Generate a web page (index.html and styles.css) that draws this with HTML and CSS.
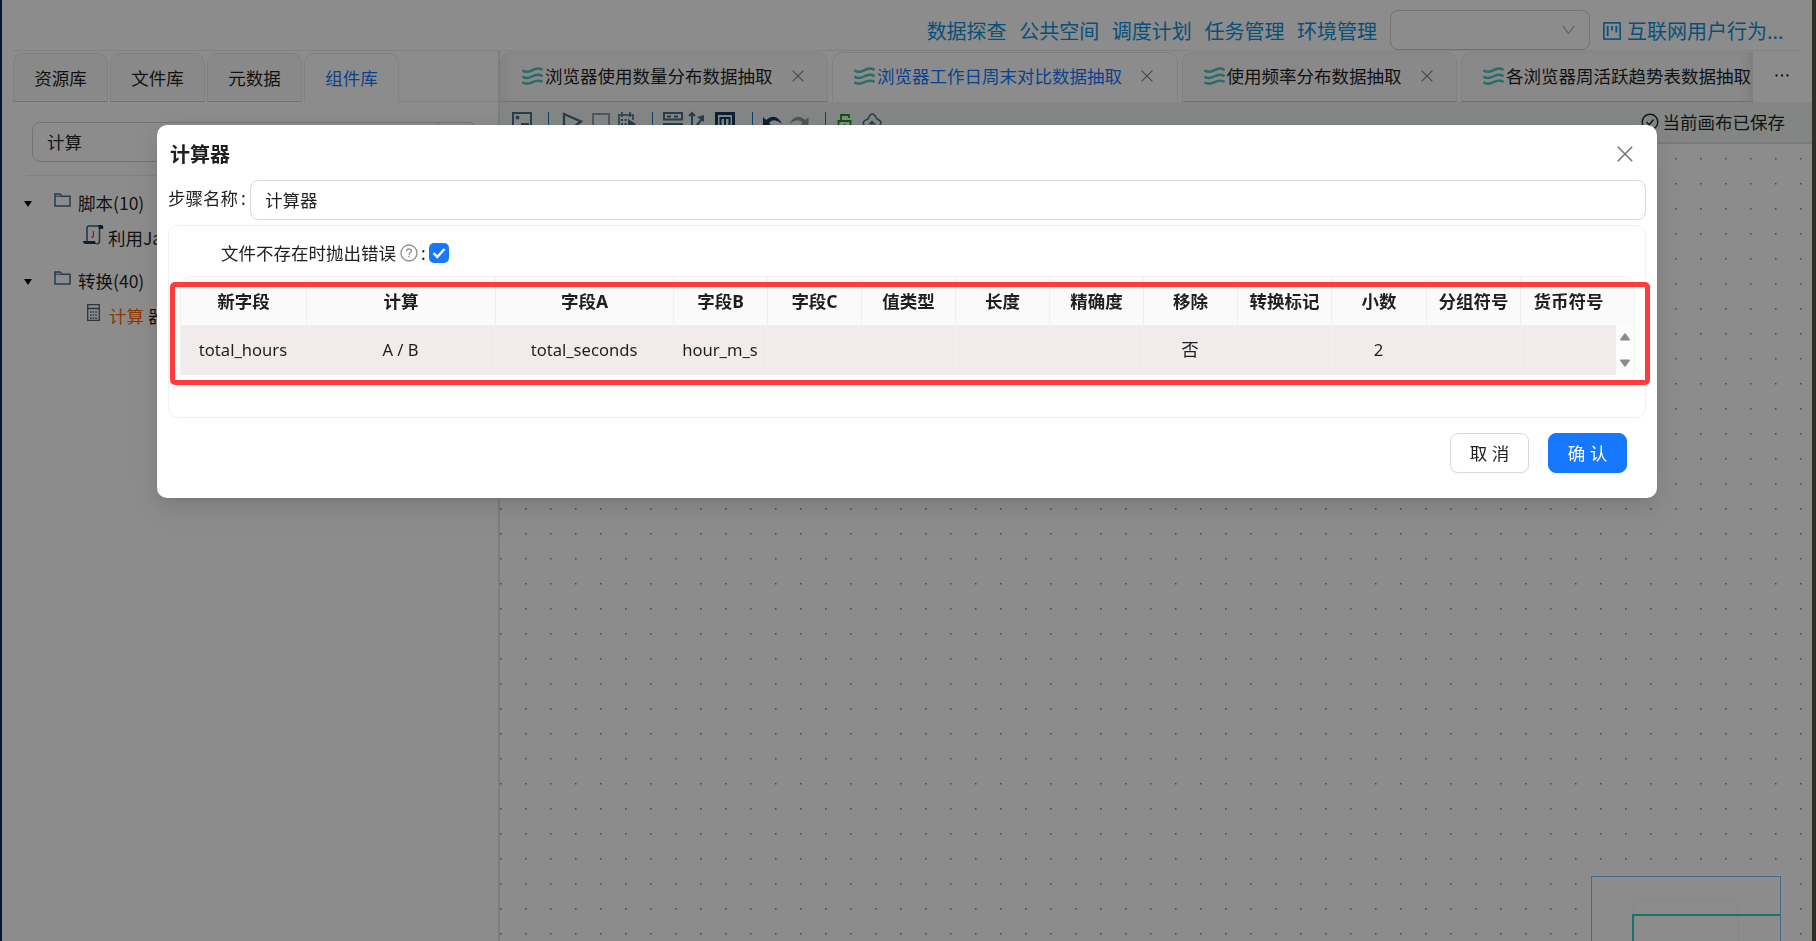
FILE: index.html
```html
<!DOCTYPE html>
<html lang="zh-CN">
<head>
<meta charset="utf-8">
<title>计算器</title>
<link rel="stylesheet" href="styles.css">
</head>
<body>
<svg width="0" height="0" class="defs">
  <symbol id="wave" viewBox="0 0 21 18"><g fill="none" stroke="currentColor" stroke-width="2.500"><path d="M.4 3.200C4 6 7 5 10 3.300S16.500.4 20.600 3"/><path d="M.4 9.400C4 12.200 7 11.200 10 9.500s6.500-2.900 10.600-.3"/><path d="M.4 15.200c3.600 2.400 6.600 1.600 9.600.1s6.500-2.900 10.600-.3"/></g></symbol>
  <symbol id="close" viewBox="0 0 12 12"><path d="M.6.6l10.800 10.800M11.400.6L.6 11.400" fill="none" stroke="currentColor" stroke-width="1.200"/></symbol>
  <symbol id="folder" viewBox="0 0 17 14"><path d="M1 1h5l2 2.200h8v9.800H1z" fill="none" stroke="currentColor" stroke-width="1.500"/><path d="M1 3.200h7" stroke="currentColor"/></symbol>
</svg>
<div class="app">
  <header class="header">
    <nav class="nav"><a>数据探查</a><a>公共空间</a><a>调度计划</a><a>任务管理</a><a>环境管理</a></nav>
    <div class="select"><svg width="13" height="10" viewBox="0 0 13 10"><path d="M.8 1l5.700 7.500L12.200 1" fill="none" stroke="#b8b8b8" stroke-width="1.300"/></svg></div>
    <a class="project"><svg width="18" height="18" viewBox="0 0 18 18" fill="none" stroke="currentColor" stroke-width="1.600"><rect x=".9" y=".9" width="16.200" height="16.200"/><path d="M4.700 4v10M9 4v4.500M13.300 4v6.500" stroke-width="1.800"/></svg>互联网用户行为...</a>
  </header>
  <div class="main">
    <aside class="side">
      <div class="side-tabs"><div class="stab">资源库</div><div class="stab">文件库</div><div class="stab">元数据</div><div class="stab on">组件库</div><div class="rest"></div></div>
      <div class="search"><span>计算</span><i></i></div>
      <div class="tree">
        <div class="node"><b class="caret"></b><svg class="folder" width="17" height="14"><use href="#folder"/></svg>脚本(10)</div>
        <div class="leaf script"><svg width="21" height="20" viewBox="0 0 21 20"><path d="M4 16V3Q4 1 6 1h11M16.500 2v14q0 3-3 3" fill="none" stroke="#3a6080" stroke-width="1.500"/><path d="M0 16h12q0 2 2 3H3q-3 0-3-3zM15 0h4q2 1 1 4h-4z" fill="#123d63"/><path d="M10.300 6v5q0 1.500-1.800 1" fill="none" stroke="#c02a3c" stroke-width="1.100"/></svg>利用Java代码</div>
        <div class="node second"><b class="caret"></b><svg class="folder" width="17" height="14"><use href="#folder"/></svg>转换(40)</div>
        <div class="leaf calc"><svg width="13" height="17" viewBox="0 0 13 17"><path d="M.7.7h11.600v15.600H.7zM.7 4.500h11.600" fill="none" stroke="#4a6276" stroke-width="1.300"/><path d="M3 8h7M3 11h7M3 14h7" stroke="#4a6276" stroke-width="1.600" stroke-dasharray="1.600 1"/></svg><em>计算</em> 器</div>
      </div>
    </aside>
    <section class="work">
      <div class="tabs">
        <div class="tab t1"><svg class="wave"><use href="#wave"/></svg><span>浏览器使用数量分布数据抽取</span><svg class="x"><use href="#close"/></svg></div>
        <div class="tab t2 on"><svg class="wave"><use href="#wave"/></svg><span>浏览器工作日周末对比数据抽取</span><svg class="x"><use href="#close"/></svg></div>
        <div class="tab t3"><svg class="wave"><use href="#wave"/></svg><span>使用频率分布数据抽取</span><svg class="x"><use href="#close"/></svg></div>
        <div class="tab t4"><svg class="wave"><use href="#wave"/></svg><span>各浏览器周活跃趋势表数据抽取</span></div>
        <div class="more"><svg width="14" height="3" viewBox="0 0 14 3" fill="#222"><circle cx="1.500" cy="1.500" r="1.150"/><circle cx="7" cy="1.500" r="1.150"/><circle cx="12.500" cy="1.500" r="1.150"/></svg></div>
      </div>
      <div class="toolbar">
        <svg width="400" height="40" viewBox="490 102 400 40" fill="none" stroke="#4b6e8c" stroke-width="2">
          <path d="M513 113h18v17h-18zM521 124h8"/><circle cx="517.500" cy="117.500" r="1"/>
          <path d="M564 114v20l17-12.500z" stroke-width="2.300"/><path d="M593 114h16v16h-16z" stroke="#8fa1b1"/>
          <path d="M619 115h14v5M619 114v15h10M622 112v5M630 112v5" stroke-width="1.600"/><path d="M621 120h8M621 124h6M621 127h6" stroke-dasharray="2 1.500"/><path d="M628 119l8 5-8 5z" fill="#4b6e8c" stroke="none"/>
          <path d="M664 113h18v6.500h-18zM663 124h20M667 116.500h4M674 116.500h4"/>
          <path d="M692 113v18M689 116l3-3 3 3M692 131l10-12"/><path d="M704 115v7l-7-5z" fill="#4b6e8c" stroke="none"/>
          <path d="M716.500 113.500h17v18h-17z" stroke="#153b5c" stroke-width="3"/><path d="M720.500 130v-12h9v12M725 118v12" stroke="#153b5c"/>
          <path d="M763 117v9h9l-3-3q4-6 13 1-6-12-16-4z" fill="#153b5c" stroke="none"/><path d="M808.500 117v9h-9l3-3q-4-6-13 1 6-12 16-4z" fill="#999" stroke="none"/>
          <path d="M838.500 121h12v12h-12zM841 121v-6h8v3M844.500 124v4" stroke="#159b15" stroke-width="1.800"/>
          <path d="M867 128q-8-6 1-9 4-10 9 0 8 3 0 9M872 131v-9M869 124.500l3-3 3 3" stroke-width="1.500"/>
          <path d="M548.500 112v20M652.500 112v20M752.500 112v20M825.500 112v20" stroke="#1677d0" stroke-width="1"/>
        </svg>
        <div class="saved"><svg width="18" height="18" viewBox="0 0 18 18" fill="none" stroke="#222" stroke-width="1.400"><circle cx="9" cy="9" r="7.800"/><path d="M5.500 9l2.700 3 4.300-5.500"/></svg>当前画布已保存</div>
      </div>
      <div class="canvas"><div class="minimap"><div class="mm-page"></div><div class="mm-view"></div></div></div>
    </section>
  </div>
</div>
<div class="mask"></div>
<div class="modal">
  <div class="m-head"><h1>计算器</h1><svg width="16" height="16" viewBox="0 0 12 12"><use href="#close"/></svg></div>
  <div class="field"><label>步骤名称<span>:</span></label><div class="input">计算器</div></div>
  <div class="card">
    <div class="check"><span>文件不存在时抛出错误</span><svg class="q" width="18" height="18" viewBox="0 0 18 18" fill="none" stroke="#8c8c8c" stroke-width="1.300"><circle cx="9" cy="9" r="8"/><path d="M6.600 7.300q0-2.400 2.400-2.400t2.400 2.200c0 1.700-2.400 1.600-2.400 3.600M9 12v1.500"/></svg><span class="colon">:</span><svg class="box" width="20" height="20" viewBox="0 0 20 20"><rect width="20" height="20" rx="5" fill="#1677ff"/><path d="M4.600 10l3.700 4 7.200-8" fill="none" stroke="#fff" stroke-width="2.400"/></svg></div>
    <div class="table">
      <div class="row th"><div>新字段</div><div>计算</div><div>字段A</div><div>字段B</div><div>字段C</div><div>值类型</div><div>长度</div><div>精确度</div><div>移除</div><div>转换标记</div><div>小数</div><div>分组符号</div><div>货币符号</div><div></div></div>
      <div class="row td"><div>total_hours</div><div>A / B</div><div>total_seconds</div><div>hour_m_s</div><div></div><div></div><div></div><div></div><div class="cjk">否</div><div></div><div>2</div><div></div><div></div><div class="scroll"><svg width="10" height="50" viewBox="0 0 10 50" fill="#8b8b8b"><path d="M4 9q1-1.500 2 0l4 5.500q0 1-1 1H1q-1 0-1-1zM4 41q1 1.500 2 0l4-5.500q0-1-1-1H1q-1 0-1 1z"/></svg></div></div>
    </div>
  </div>
  <div class="actions"><button>取 消</button><button class="ok">确 认</button></div>
  <div class="highlight"></div>
</div>
</body>
</html>
```
FILE: styles.css
```css
* { box-sizing: border-box; }
body { margin: 0; width: 1816px; height: 941px; overflow: hidden; background: #fff; font: 17.5px/28px "Noto Sans", "Noto Sans CJK SC", sans-serif; color: #1f1f1f; }
.defs { position: absolute; }
svg { flex: none; display: block; }
.app { height: 941px; border-left: 2px solid #002a5c; border-right: 4px solid #55534e; display: flex; flex-direction: column; }
.header { height: 51px; margin: 0 10px; border-bottom: 1px solid #ececec; display: flex; justify-content: flex-end; align-items: flex-start; padding-right: 21px; color: #0f93da; font-size: 20px; font-family: "Noto Sans CJK SC", sans-serif; line-height: 42px; }
.nav { display: flex; gap: 12.6px; padding-top: 10px; }
.select { width: 200px; height: 40px; margin: 10px 13px 0 13px; border: 1px solid #d0d0d0; border-radius: 8px; display: flex; justify-content: flex-end; align-items: center; padding-right: 14px; }
.project { width: 178px; padding-top: 10px; display: flex; align-items: center; gap: 6px; white-space: nowrap; }
.main { flex: 1; display: flex; min-height: 0; font-family: "Noto Sans CJK SC", sans-serif; }
.side { width: 498px; border-right: 2px solid #e3e3e3; }
.side-tabs { display: flex; gap: 2px; height: 51px; padding: 2px 0 0 11px; }
.stab { width: 95px; border: 1px solid #ececec; border-bottom-color: #cfcfcf; border-radius: 10px 10px 0 0; background: #fafafa; text-align: center; line-height: 47px; }
.stab.on { background: #fff; color: #1677ff; border-bottom-color: #fff; }
.rest { flex: 1; margin-left: -2px; border-bottom: 1px solid #ececec; }
.search { width: 445px; height: 40px; margin: 20px 0 0 30px; border: 1px solid #d0d0d0; border-radius: 8px; padding-left: 14px; display: flex; line-height: 38px; justify-content: space-between; }
.search i { width: 38px; border-left: 1px solid #d0d0d0; }
.tree { margin: 13px 20px 0 24px; border-top: 1px solid #ececec; padding-top: 12px; }
.node { display: flex; align-items: center; height: 30px; }
.node.second { margin-top: 8px; }
.caret { border: 4px solid transparent; border-top: 6px solid #111; border-bottom: 0; margin: 1px 22px 0 -2px; }
.folder { color: #4b6e8c; margin: 0 7px 6px 0; }
.leaf { display: flex; align-items: center; height: 40px; white-space: pre; }
.leaf em { color: #f60; font-style: normal; }
.script { padding-left: 57px; gap: 4px; }
.script svg { margin-bottom: 7px; }
.calc { padding-left: 61px; }
.calc svg { margin: 0 9px 8px 0; }
.work { width: 1312px; flex: none; display: flex; flex-direction: column; }
.tabs { display: flex; height: 51px; padding-top: 1px; gap: 4px; overflow: hidden; }
.tab { flex: none; border: 1px solid #ececec; border-bottom-color: #cfcfcf; border-radius: 10px 10px 0 0; background: #fafafa; display: flex; align-items: center; padding: 0 0 3px 21px; white-space: nowrap; }
.tab.on { color: #1677ff; background: #fff; border-bottom-color: #fff; }
.wave { width: 21px; height: 18px; color: #4fc3bd; margin-right: 2px; }
.x { width: 12px; height: 12px; margin-left: 19px; color: #888; }
.t1 { width: 328px; background: linear-gradient(90deg, #f0f0f0, #fafafa 16px); }
.t2 { width: 345.500px; }
.t3 { width: 275.500px; }
.t4 { width: 292px; border-right: 0; border-radius: 10px 0 0; background: linear-gradient(270deg, #e8e8e8, #fafafa 14px); }
.more { width: 57px; margin-left: -4px; display: flex; align-items: center; justify-content: center; padding-bottom: 3px; }
.toolbar { height: 42px; background: #eff5f3; border-bottom: 2px solid #dedede; display: flex; justify-content: space-between; }
.toolbar > svg { margin-left: -10px; }
.saved { display: flex; align-items: center; gap: 4px; padding: 0 27px 1px 0; }
.canvas { flex: 1; position: relative; background: radial-gradient(circle at .7px .7px, #808080 .3px, #c8c8c8 .8px, #d6d6d6 1.150px, transparent 1.200px) 0 14px / 25px 25px; }
.minimap { position: absolute; left: 1091px; top: 732px; width: 190px; height: 66px; border: 1px solid #85bff5; border-bottom: 0; background: #fff; overflow: hidden; }
.mm-page { position: absolute; left: 43px; top: 25px; width: 102px; height: 60px; box-shadow: 0 0 5px #eee; }
.mm-view { position: absolute; left: 40px; top: 37px; width: 160px; height: 60px; border: 2px solid #31d0c0; }
.mask { position: fixed; inset: 0; background: rgba(0, 0, 0, .45); }
.modal { position: fixed; left: 157px; top: 125px; width: 1500px; height: 373px; background: #fff; border-radius: 10px; padding: 13px 11px 0; box-shadow: 0 7px 20px rgba(0,0,0,.08), 0 4px 8px -5px rgba(0,0,0,.12), 0 11px 35px 10px rgba(0,0,0,.05); }
.m-head { display: flex; justify-content: space-between; align-items: center; height: 32px; padding: 0 13px 0 2px; color: #777; }
h1 { margin: 0; font: bold 20px/30px "Noto Sans CJK SC", sans-serif; color: #1f1f1f; }
.field { display: flex; height: 40px; margin-top: 10px; }
.field label { width: 82px; line-height: 37px; white-space: nowrap; }
.field label span { margin-left: 3px; }
.input { flex: 1; border: 1px solid #d9d9d9; border-radius: 8px; padding-left: 14px; line-height: 38px; }
.card { height: 193px; margin-top: 5px; border: 1px solid #f0f0f0; border-radius: 10px; padding: 12px 11px 0; }
.check { display: flex; align-items: center; height: 30px; padding-left: 41px; }
.q { margin-left: 4px; }
.colon { margin: 0 3px 0 3px; }
.table { margin-top: 8px; width: 1455px; border: 1px solid #f0f0f0; border-bottom: 0; border-radius: 10px 10px 0 0; overflow: hidden; }
.row { display: grid; grid-template-columns: 126px 189px 178px 94px 94px 94px 94px 94px 94px 94px 95px 94px 95px 18px; text-align: center; white-space: nowrap; }
.row > div { border-right: 1px solid #f0f0f0; border-bottom: 1px solid #f0f0f0; }
.row > div:nth-child(n+13) { border-right: 0; }
.th { font-weight: bold; background: #fafafa; line-height: 48px; height: 48px; }
.td { background: #f2ebeb; font-size: 16.600px; line-height: 50px; height: 50px; }
.td > div { padding-right: 1px; }
.td .cjk { font-size: 17.500px; line-height: 48px; }
.td .scroll { background: #fcfcfc; display: flex; justify-content: center; padding: 0; }
.actions { display: flex; justify-content: flex-end; gap: 19px; padding: 15px 19px 0 0; }
button { width: 79px; height: 40px; padding: 0; border: 1px solid #d9d9d9; border-radius: 8px; background: #fff; color: #1f1f1f; font: inherit; box-shadow: 0 2px 0 rgba(0,0,0,.02); }
button.ok { background: #1677ff; border-color: #1677ff; color: #fff; }
.highlight { position: absolute; left: 13px; top: 157px; width: 1480px; height: 103px; border: 5px solid #ff3b3b; border-radius: 5px; }
```
